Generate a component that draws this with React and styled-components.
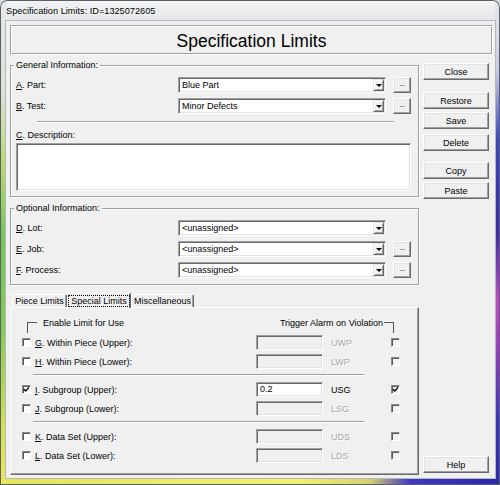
import React from "react";
import styled, { createGlobalStyle } from "styled-components";

const GlobalStyle = createGlobalStyle`
  html, body { margin: 0; padding: 0; }
  body {
    width: 500px; height: 485px; overflow: hidden; background: #d8dadc;
    font-family: "Liberation Sans", Arial, sans-serif; font-size: 9px; color: #000;
  }
  * { box-sizing: border-box; }
`;

const Window = styled.div`
  width: 500px;
  height: 485px;
  display: flex;
  flex-direction: column;
  padding: 0 5px 7px 6px;
  border-radius: 7px 7px 0 0;
  box-shadow: inset 0 0 0 1px #5a6067;
  background:
    linear-gradient(to bottom, #e6e8ea 0, #dfe3d6 90px, #b6d866 170px, #74c656 240px, #86cc52 330px, #cfe04e 420px, #ece85a 485px) left top / 6px 100% no-repeat,
    linear-gradient(to bottom, #e6e8ea 0, #c9cce6 70px, #3d46c0 140px, #3a2ca8 230px, #c04ac8 300px, #9a3cc0 350px, #3b34c0 420px, #2a2aa8 485px) right top / 5px 100% no-repeat,
    linear-gradient(to right, #e6e45a 0, #f4ef6e 60%, #d8d070 74%, #4038c0 82%, #2c28a8 100%) left bottom / 100% 7px no-repeat,
    linear-gradient(to bottom, #f2f3f4 0, #e4e6e8 21px, #e4e6e8 100%);
`;

const TitleBar = styled.div`
  height: 21px;
  display: flex;
  align-items: center;
  font-size: 9.2px;
  color: #000;
  text-shadow: 0 0 6px #fff, 0 0 3px #fff;
`;

const Client = styled.div`
  flex: 1;
  display: flex;
  flex-direction: column;
  background: #f0f0f0;
  box-shadow: 0 0 0 1px #b4b9bf;
  padding: 4px 2px 3px 4px;
`;

const Heading = styled.div`
  height: 30px;
  display: flex;
  align-items: center;
  justify-content: center;
  font-size: 17.5px;
  border: 1px solid;
  border-color: #a0a0a0 #fff #fff #a0a0a0;
  box-shadow: inset 1px 1px 0 #fff, inset -1px -1px 0 #a0a0a0;
  padding-top: 2px;
`;

const MainRow = styled.div`
  flex: 1;
  display: flex;
  gap: 4px;
  margin-top: 8px;
  padding-right: 4px;
`;

const LeftCol = styled.div`
  width: 409px;
  display: flex;
  flex-direction: column;
  padding-top: 2px;
`;

const RightCol = styled.div`
  width: 67px;
  display: flex;
  flex-direction: column;
  padding-bottom: 2px;
`;

const GroupBox = styled.div`
  position: relative;
  border: 1px solid #a0a0a0;
  box-shadow: inset 1px 1px 0 #fff, 1px 1px 0 #fff;
  padding: ${(p) => p.$pt}px 5px ${(p) => p.$pb}px 5px;
  margin-top: ${(p) => p.$mt || 0}px;
  display: flex;
  flex-direction: column;
`;

const Legend = styled.span`
  position: absolute;
  top: -7px;
  left: 3px;
  line-height: 12px;
  padding: 0 2px;
  background: #f0f0f0;
`;

const FieldRow = styled.div`
  display: flex;
  align-items: center;
  height: 16px;
  margin-top: ${(p) => p.$mt || 0}px;
`;

const FieldLabel = styled.span`
  width: 162px;
  line-height: 12px;
`;

const Key = styled.span`
  text-decoration: underline;
`;

const Combo = styled.div`
  width: 208px;
  height: 16px;
  display: flex;
  align-items: center;
  background: #fff;
  border: 1px solid;
  border-color: #a0a0a0 #fff #fff #a0a0a0;
  box-shadow: inset 1px 1px 0 #696969, inset -1px -1px 0 #e3e3e3;
  padding: 1px 1px 1px 3px;
`;

const ComboText = styled.span`
  flex: 1;
  line-height: 12px;
`;

const DropButton = styled.span`
  width: 11px;
  height: 12px;
  display: flex;
  align-items: center;
  justify-content: center;
  background: #f0f0f0;
  border: 1px solid;
  border-color: #e3e3e3 #696969 #696969 #e3e3e3;
  box-shadow: inset 1px 1px 0 #fff, inset -1px -1px 0 #a0a0a0;
`;

const Arrow = styled.span`
  width: 0;
  height: 0;
  border-left: 3px solid transparent;
  border-right: 3px solid transparent;
  border-top: 3px solid #000;
`;

const Button = styled.div`
  height: ${(p) => p.$h || 17}px;
  margin-top: ${(p) => p.$mt || 0}px;
  display: flex;
  align-items: center;
  justify-content: center;
  background: #f0f0f0;
  border: 1px solid;
  border-color: #fff #696969 #696969 #fff;
  box-shadow: inset -1px -1px 0 #a0a0a0, inset 1px 1px 0 #e3e3e3;
  line-height: 12px;
`;

const EllipsisButton = styled(Button)`
  width: 18px;
  margin-left: 7px;
  font-size: 8px;
  color: #1b1f6e;
  padding-bottom: 2px;
  letter-spacing: -0.5px;
`;

const HelpButton = styled(Button)`
  margin-top: auto;
`;

const Separator = styled.div`
  width: ${(p) => p.$w}px;
  margin: ${(p) => p.$m};
  border-top: 1px solid #a0a0a0;
  border-bottom: 1px solid #fff;
`;

const Caption = styled.div`
  line-height: 12px;
  margin-top: ${(p) => p.$mt || 0}px;
`;

const TextArea = styled.div`
  width: 395px;
  height: 48px;
  margin-top: 2px;
  background: #fff;
  border: 1px solid;
  border-color: #a0a0a0 #fff #fff #a0a0a0;
  box-shadow: inset 1px 1px 0 #696969, inset -1px -1px 0 #e3e3e3;
`;

const TabStrip = styled.div`
  display: flex;
  align-items: flex-end;
  height: 15px;
  margin-top: 7px;
  padding-left: 2px;
  position: relative;
  z-index: 1;
`;

const Tab = styled.div`
  width: ${(p) => p.$w}px;
  height: ${(p) => (p.$active ? 16 : 13)}px;
  margin-bottom: ${(p) => (p.$active ? -1 : 0)}px;
  display: flex;
  align-items: center;
  justify-content: center;
  background: #f0f0f0;
  border-top: 1px solid #fff;
  border-left: 1px solid #fff;
  border-right: 1px solid #696969;
  border-radius: 2px 2px 0 0;
  box-shadow: inset -1px 0 0 #a0a0a0;
  line-height: 11px;
`;

const FocusLabel = styled.span`
  border: 1px dotted #000;
  padding: 0 2px;
  line-height: 10px;
`;

const TabPanel = styled.div`
  flex: 1;
  border: 1px solid;
  border-color: #fff #696969 #696969 #fff;
  box-shadow: inset -1px -1px 0 #a0a0a0;
  padding: 9px 24px 0 11px;
  display: flex;
  flex-direction: column;
`;

const HeaderRow = styled.div`
  display: flex;
  align-items: flex-start;
  height: 16px;
`;

const Bracket = styled.span`
  width: ${(p) => p.$w}px;
  height: 11px;
  margin-top: 5px;
  margin-left: ${(p) => p.$ml || 0}px;
  border-top: 1px solid #555;
  ${(p) => (p.$side === "left" ? "border-left: 1px solid #555;" : "border-right: 1px solid #555;")}
`;

const HeaderText = styled.span`
  line-height: 12px;
  margin-left: ${(p) => p.$ml || 0}px;
  margin-right: ${(p) => p.$mr || 0}px;
`;

const Spacer = styled.span`
  flex: 1;
`;

const LimitRows = styled.div`
  display: flex;
  flex-direction: column;
  gap: 4px;
  margin-top: 2px;
`;

const LimitRow = styled.div`
  display: grid;
  grid-template-columns: 13px 221px 67px 68px 9px;
  align-items: center;
  height: 15px;
`;

const CheckBox = styled.span`
  width: 9px;
  height: 9px;
  display: flex;
  align-items: center;
  justify-content: center;
  background: ${(p) => (p.$disabled ? "#f3f3f3" : "#fff")};
  border: 1px solid;
  border-color: #8a8a8a #fff #fff #8a8a8a;
  box-shadow: inset 1px 1px 0 #5a5a5a;
`;

const LimitLabel = styled.span`
  line-height: 12px;
`;

const ValueBox = styled.div`
  height: 15px;
  display: flex;
  align-items: center;
  padding-left: 3px;
  background: ${(p) => (p.$enabled ? "#fff" : "#f0f0f0")};
  border: 1px solid;
  border-color: #a0a0a0 #fff #fff #a0a0a0;
  box-shadow: inset 1px 1px 0 #696969, inset -1px -1px 0 #e3e3e3;
  line-height: 11px;
`;

const Code = styled.span`
  padding-left: 8px;
  line-height: 12px;
  color: ${(p) => (p.$enabled ? "#000" : "#a8a8a8")};
  text-shadow: ${(p) => (p.$enabled ? "none" : "1px 1px 0 #fff")};
`;

const Check = () => (
  <svg width="7" height="7" viewBox="0 0 7 7">
    <path d="M1 3.2 L2.7 5 L6 1.4" fill="none" stroke="#000" strokeWidth="1.4" />
  </svg>
);

const limitGroups = [
  [
    { key: "G", rest: ". Within Piece (Upper):", code: "UWP" },
    { key: "H", rest: ". Within Piece (Lower):", code: "LWP" },
  ],
  [
    { key: "I", rest: ". Subgroup (Upper):", code: "USG", enabled: true, value: "0.2" },
    { key: "J", rest: ". Subgroup (Lower):", code: "LSG" },
  ],
  [
    { key: "K", rest: ". Data Set (Upper):", code: "UDS" },
    { key: "L", rest: ". Data Set (Lower):", code: "LDS" },
  ],
];

const Field = ({ k, rest, value, ellipsis, mt }) => (
  <FieldRow $mt={mt}>
    <FieldLabel>
      <Key>{k}</Key>
      {rest}
    </FieldLabel>
    <Combo>
      <ComboText>{value}</ComboText>
      <DropButton>
        <Arrow />
      </DropButton>
    </Combo>
    {ellipsis && <EllipsisButton $h={16}>...</EllipsisButton>}
  </FieldRow>
);

const LimitLine = ({ row }) => (
  <LimitRow>
    <CheckBox>{row.enabled && <Check />}</CheckBox>
    <LimitLabel>
      <Key>{row.key}</Key>
      {row.rest}
    </LimitLabel>
    <ValueBox $enabled={row.enabled}>{row.value}</ValueBox>
    <Code $enabled={row.enabled}>{row.code}</Code>
    <CheckBox $disabled>{row.enabled && <Check />}</CheckBox>
  </LimitRow>
);

export default function App() {
  return (
    <>
      <GlobalStyle />
      <Window>
        <TitleBar>Specification Limits: ID=1325072605</TitleBar>
        <Client>
          <Heading>Specification Limits</Heading>
          <MainRow>
            <LeftCol>
              <GroupBox $pt={11} $pb={5}>
                <Legend>General Information:</Legend>
                <Field k="A" rest=". Part:" value="Blue Part" ellipsis />
                <Field k="B" rest=". Test:" value="Minor Defects" ellipsis mt={5} />
                <Separator $w={357} $m="7px 0 0 21px" />
                <Caption $mt={6}>
                  <Key>C</Key>. Description:
                </Caption>
                <TextArea />
              </GroupBox>
              <GroupBox $pt={11} $pb={6} $mt={11}>
                <Legend>Optional Information:</Legend>
                <Field k="D" rest=". Lot:" value="<unassigned>" />
                <Field k="E" rest=". Job:" value="<unassigned>" ellipsis mt={5} />
                <Field k="F" rest=". Process:" value="<unassigned>" ellipsis mt={5} />
              </GroupBox>
              <TabStrip>
                <Tab $w={55}>Piece Limits</Tab>
                <Tab $w={64} $active>
                  <FocusLabel>Special Limits</FocusLabel>
                </Tab>
                <Tab $w={63}>Miscellaneous</Tab>
              </TabStrip>
              <TabPanel>
                <HeaderRow>
                  <Bracket $side="left" $w={10} $ml={5} />
                  <HeaderText $ml={6}>Enable Limit for Use</HeaderText>
                  <Spacer />
                  <HeaderText $mr={1}>Trigger Alarm on Violation</HeaderText>
                  <Bracket $side="right" $w={10} />
                </HeaderRow>
                <LimitRows>
                  <LimitLine row={limitGroups[0][0]} />
                  <LimitLine row={limitGroups[0][1]} />
                </LimitRows>
                <Separator $w={331} $m="5px 0 4px 11px" />
                <LimitRows>
                  <LimitLine row={limitGroups[1][0]} />
                  <LimitLine row={limitGroups[1][1]} />
                </LimitRows>
                <Separator $w={331} $m="5px 0 4px 11px" />
                <LimitRows>
                  <LimitLine row={limitGroups[2][0]} />
                  <LimitLine row={limitGroups[2][1]} />
                </LimitRows>
              </TabPanel>
            </LeftCol>
            <RightCol>
              <Button>Close</Button>
              <Button $mt={12}>Restore</Button>
              <Button $mt={3}>Save</Button>
              <Button $mt={5}>Delete</Button>
              <Button $mt={11}>Copy</Button>
              <Button $mt={3}>Paste</Button>
              <HelpButton>Help</HelpButton>
            </RightCol>
          </MainRow>
        </Client>
      </Window>
    </>
  );
}
